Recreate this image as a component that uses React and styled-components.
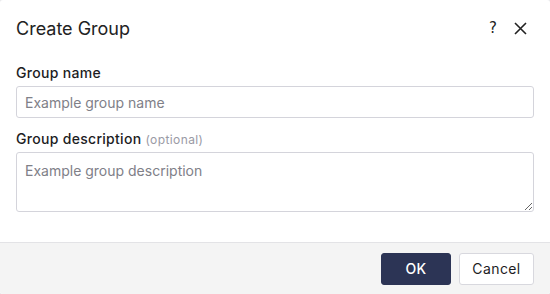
import React from "react";
import styled, { createGlobalStyle } from "styled-components";

const Global = createGlobalStyle`
  html, body { margin: 0; padding: 0; background: #e9e9ec; }
  body { font-family: Inter, "Noto Sans", sans-serif; color: #1d1d1f; }
  * { box-sizing: border-box; }
`;

const Dialog = styled.div`
  width: 550px;
  height: 294px;
  background: #fff;
  border-radius: 3px;
  overflow: hidden;
  display: flex;
  flex-direction: column;
`;

const Header = styled.div`
  display: flex;
  align-items: center;
  height: 56px;
  padding: 0 22px 0 16px;
`;

const Title = styled.h2`
  flex: 1;
  margin: 0;
  font-size: 18px;
  font-weight: 400;
  color: #222;
`;

const IconButton = styled.button`
  border: 0;
  background: none;
  padding: 0;
  margin-left: ${(p) => p.$gap || 0}px;
  width: 16px;
  height: 16px;
  display: flex;
  align-items: center;
  justify-content: center;
  color: #222;
  font-family: "DejaVu Sans", sans-serif;
  font-size: 15px;
  cursor: pointer;
`;

const Body = styled.div`
  flex: 1;
  padding: 8px 16px 0 16px;
  display: flex;
  flex-direction: column;
`;

const Label = styled.label`
  display: block;
  font-size: 14px;
  font-weight: 500;
  color: #1d1d1f;
  line-height: 18px;
  height: 18px;
  margin-bottom: 4px;
  letter-spacing: 0.3px;
`;

const Optional = styled.span`
  font-size: 12px;
  font-weight: 400;
  color: #9a9aa5;
  letter-spacing: 0.4px;
`;

const Input = styled.input`
  width: 100%;
  height: 32px;
  border: 1px solid #d4d4db;
  border-radius: 3px;
  padding: 0 8px;
  font-family: inherit;
  font-size: 14px;
  margin-bottom: 12px;
  &::placeholder { color: #808088; }
`;

const TextArea = styled.textarea`
  width: 100%;
  height: 60px;
  border: 1px solid #d4d4db;
  border-radius: 3px;
  padding: 9px 8px;
  font-family: inherit;
  font-size: 14px;
  resize: vertical;
  display: block;
  &::placeholder { color: #808088; }
`;

const Footer = styled.div`
  height: 52px;
  background: #f4f4f4;
  border-top: 1px solid #e3e3e6;
  display: flex;
  justify-content: flex-end;
  align-items: center;
  gap: 8px;
  padding: 0 16px 0 16px;
`;

const Button = styled.button`
  height: 32px;
  padding: 0;
  width: ${(p) => p.$w}px;
  border-radius: 3px;
  font-family: inherit;
  font-size: 14px;
  font-weight: ${(p) => (p.$primary ? 500 : 400)};
  letter-spacing: 0.4px;
  cursor: pointer;
  background: ${(p) => (p.$primary ? "#2c3455" : "#fff")};
  color: ${(p) => (p.$primary ? "#fff" : "#1d1d1f")};
  border: 1px solid ${(p) => (p.$primary ? "#2c3455" : "#d8d8de")};
`;

export default function App() {
  return (
    <>
      <Global />
      <Dialog>
        <Header>
          <Title>Create Group</Title>
          <IconButton aria-label="Help">?</IconButton>
          <IconButton aria-label="Close" $gap={11}>
            <svg width="13" height="13" viewBox="0 0 13 13">
              <path d="M1 1L12 12M12 1L1 12" stroke="#222" strokeWidth="1.6" />
            </svg>
          </IconButton>
        </Header>
        <Body>
          <Label>Group name</Label>
          <Input placeholder="Example group name" />
          <Label>
            Group description <Optional>(optional)</Optional>
          </Label>
          <TextArea placeholder="Example group description" />
        </Body>
        <Footer>
          <Button $primary $w={70}>OK</Button>
          <Button $w={75}>Cancel</Button>
        </Footer>
      </Dialog>
    </>
  );
}
